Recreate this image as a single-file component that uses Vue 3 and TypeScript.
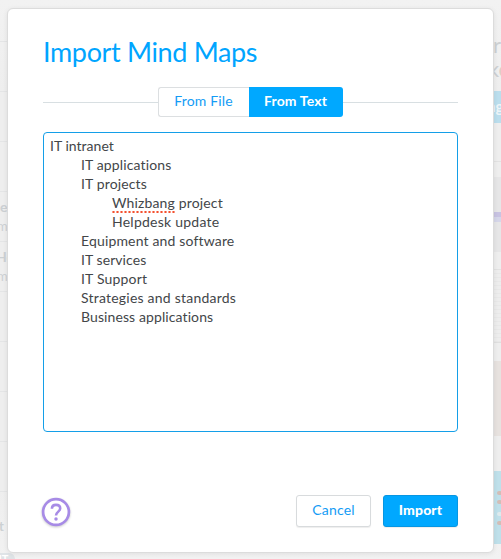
<script setup lang="ts">
interface OutlineLine {
  text: string
  level: number
  tracking: number
  misspelled?: string
}

const outline: OutlineLine[] = [
  { text: 'IT intranet', level: 0, tracking: 0.02 },
  { text: 'IT applications', level: 1, tracking: 0.14 },
  { text: 'IT projects', level: 1, tracking: 0.13 },
  { text: ' project', misspelled: 'Whizbang', level: 2, tracking: 0.15 },
  { text: 'Helpdesk update', level: 2, tracking: 0.24 },
  { text: 'Equipment and software', level: 1, tracking: 0.16 },
  { text: 'IT services', level: 1, tracking: 0.07 },
  { text: 'IT Support', level: 1, tracking: 0.18 },
  { text: 'Strategies and standards', level: 1, tracking: 0.22 },
  { text: 'Business applications', level: 1, tracking: 0.1 },
]

const rows: { title: string; meta: string }[] = [
  { title: '', meta: '' },
  { title: '', meta: '' },
  { title: '', meta: '' },
  { title: 'e', meta: 'm' },
  { title: 'He', meta: 'm' },
  { title: '', meta: '' },
  { title: '', meta: '' },
  { title: '', meta: '' },
  { title: '', meta: '' },
  { title: '', meta: 't l' },
]
</script>

<template>
  <div class="page">
    <div class="backdrop" aria-hidden="true">
      <div class="list">
        <div v-for="(row, i) in rows" :key="i" class="row">
          <span class="row-title">{{ row.title }}</span>
          <span class="row-meta">{{ row.meta }}</span>
        </div>
        <div class="pill">IT</div>
      </div>
      <div class="side">
        <div class="side-heading"><span>r</span><span>k<i>e</i></span></div>
        <div class="side-button">ng</div>
        <div class="side-gap"></div>
        <div class="thumb grey"><div class="stripe"></div></div>
        <div class="between"></div>
        <div class="thumb notes"></div>
        <div class="thumb tan"></div>
        <div class="thumb sky"><b></b><b></b><b class="pale"></b><b></b></div>
      </div>
    </div>

    <main class="dialog">
      <h1>Import Mind Maps</h1>
      <div class="tabs">
        <button class="tab" type="button">From File</button>
        <button class="tab active" type="button">From Text</button>
      </div>
      <div class="editor">
        <div v-for="(line, i) in outline" :key="i" class="line" :class="`level-${line.level}`">
          <span :style="{ letterSpacing: line.tracking + 'px' }"><span v-if="line.misspelled" class="misspelled">{{ line.misspelled }}</span>{{ line.text }}</span>
        </div>
      </div>
      <footer>
        <svg class="help" width="30" height="32" viewBox="0 0 30 32">
          <circle cx="15" cy="15" r="12.9" fill="#fff" stroke="#a78be6" stroke-width="2.7" />
          <path d="M10.9 11.8C10.9 9.2 12.5 7.9 15 7.9S19.2 9.3 19.2 11.6C19.2 14.5 15 14.9 15 18.5" fill="none" stroke="#a78be6" stroke-width="2.6" />
          <circle cx="15" cy="21.9" r="1.75" fill="#a78be6" />
        </svg>
        <button class="action" type="button">Cancel</button>
        <button class="action primary" type="button">Import</button>
      </footer>
    </main>
  </div>
</template>

<style>
body {
  margin: 0;
  background: #eee;
}
</style>

<style scoped>
.page {
  position: relative;
  width: 501px;
  height: 559px;
  overflow: hidden;
  box-sizing: border-box;
  padding: 8px 8px 6px 7px;
  font-family: Lato, "Liberation Sans", sans-serif;
  font-variant-ligatures: none;
  background: #eee;
}
.backdrop {
  position: absolute;
  inset: 0;
  display: flex;
  justify-content: space-between;
  background: linear-gradient(#f2f2f2, #eee 90px, #eee 490px, #f2f2f2);
}
.list {
  width: 16px;
  padding-top: 41px;
  box-sizing: border-box;
}
.row {
  height: 50px;
  box-sizing: border-box;
  border-top: 1px solid #e4e5e6;
  padding-top: 5px;
  display: flex;
  flex-direction: column;
  align-items: flex-start;
  white-space: nowrap;
  color: #ccd0d3;
}
.row-title {
  height: 19px;
  font-size: 14px;
  line-height: 19px;
  font-weight: 700;
}
.row:nth-child(5) .row-title {
  margin-left: -4px;
}
.row-meta {
  font-size: 13px;
  line-height: 20px;
  margin-left: -3px;
}
.row:nth-child(10) .row-meta {
  margin-left: -1px;
  font-weight: 700;
}
.pill {
  margin: 12px 0 0 -8px;
  width: 23px;
  height: 14px;
  border-radius: 6px;
  background: #dfe4e7;
  color: #fff;
  font-size: 11px;
  line-height: 11px;
  font-weight: 700;
  text-align: center;
}
.side {
  width: 10px;
  display: flex;
  flex-direction: column;
}
.side-heading {
  height: 58px;
  padding-top: 33px;
  display: flex;
  flex-direction: column;
  color: #cdd0d3;
  font-size: 22px;
  line-height: 24px;
  white-space: nowrap;
}
.side-heading span {
  margin-left: 2px;
}
.side-heading span + span {
  margin-left: -3px;
}
.side-heading i {
  color: #dfcdc6;
  font-style: normal;
}
.side-button {
  height: 32px;
  flex: none;
  background: #bbdeed;
  color: #edf5f8;
  font: 700 15px/31px Lato, sans-serif;
  text-indent: -4px;
}
.side-gap {
  height: 54px;
  box-sizing: border-box;
  background: linear-gradient(#e2e2e2, #e2e2e2) 0 38px / 100% 1px no-repeat;
  flex: none;
}
.thumb {
  flex: none;
}
.grey {
  height: 75px;
  background: #e6e6e7;
}
.stripe {
  height: 5px;
  background: #c8c3e2;
  border-bottom: 5px solid #d5d6e9;
  transform: translateY(35px);
}
.between {
  height: 18px;
  flex: none;
  box-sizing: border-box;
  border-bottom: 1px solid #e2e2e2;
}
.notes {
  height: 72px;
  margin-bottom: 18px;
  background: repeating-linear-gradient(#ededed 0 3px, #e8e8e8 3px 4px);
  border-bottom: 1px solid #dfdfdf;
}
.tan {
  height: 75px;
  margin-bottom: 35px;
  background: #e7e2df;
}
.sky {
  height: 73px;
  background: #bfe0ea;
  box-sizing: border-box;
  padding: 20px 0 0 6px;
  display: flex;
  flex-direction: column;
  gap: 5px;
}
.sky b {
  width: 5px;
  height: 4px;
  border-radius: 2px;
  background: #d3bdb6;
}
.sky .pale {
  background: #deeaed;
  margin-top: 3px;
}
.dialog {
  position: relative;
  box-sizing: border-box;
  width: 487px;
  height: 545px;
  border: 1px solid #dcdcdc;
  border-radius: 6px;
  background: #fff;
  padding: 26px 35px 0;
  box-shadow: 0 1px 5px rgba(0, 0, 0, 0.08);
  display: flex;
  flex-direction: column;
}
h1 {
  margin: 0;
  height: 52px;
  font-size: 27px;
  line-height: 34px;
  font-weight: 400;
  letter-spacing: -0.35px;
  color: #00a5ff;
  white-space: nowrap;
}
.tabs {
  display: flex;
  align-items: center;
  height: 30px;
  margin-bottom: 15px;
}
.tabs::before,
.tabs::after {
  content: "";
  height: 1px;
  flex: 1;
  background: #d8dfe2;
}
button {
  box-sizing: border-box;
  margin: 0;
  padding: 0 0 3px;
  font-family: Lato, "Liberation Sans", sans-serif;
  font-variant-ligatures: none;
  font-size: 14px;
  letter-spacing: 0.15px;
  white-space: nowrap;
  color: #149cf5;
  background: #fff;
  border: 1px solid #dcdfe1;
}
.tab {
  width: 91px;
  height: 30px;
  border-right: 0;
  border-radius: 3px 0 0 3px;
  padding-right: 1px;
}
.tab.active {
  width: 94px;
  border: 0;
  border-radius: 0 3px 3px 0;
  color: #fff;
  background: #00a8ff;
  font-weight: 700;
}
.editor {
  box-sizing: border-box;
  height: 300px;
  border: 1px solid #149fe8;
  border-radius: 4px;
  padding: 3px 6px;
  color: #434649;
  font-size: 14px;
}
.line {
  height: 19px;
  line-height: 19px;
  white-space: pre;
}
.level-1 {
  padding-left: 31px;
}
.level-2 {
  padding-left: 62px;
}
.misspelled {
  background: radial-gradient(circle at 1.5px 1px, #f4512f 0.9px, transparent 1.4px) 0 100% / 4px 2px repeat-x;
  padding-bottom: 2px;
}
footer {
  display: flex;
  align-items: center;
  margin-top: 63px;
  height: 32px;
}
.help {
  margin: 4px auto 0 -2px;
  filter: drop-shadow(0 1px 1px rgba(0, 0, 0, 0.2));
}
.action {
  width: 75px;
  height: 32px;
  border-color: #d8dbdd;
  border-radius: 3px;
  box-shadow: 0 1px 1px rgba(0, 0, 0, 0.07);
}
.action.primary {
  margin-left: 12px;
  border-color: #0796e2;
  background: #00a8ff;
  color: #fff;
  font-weight: 900;
}
</style>
